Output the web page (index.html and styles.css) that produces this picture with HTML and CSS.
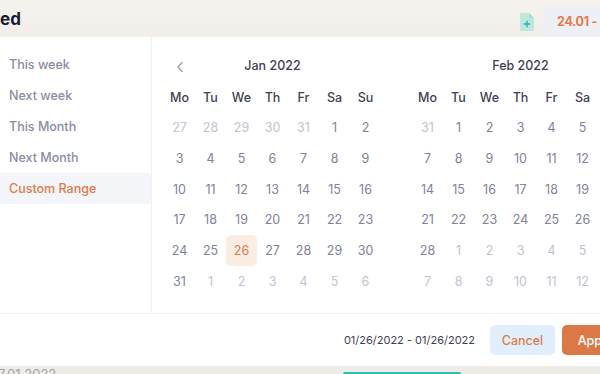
FILE: index.html
```html
<!DOCTYPE html>
<html lang="en">
<head>
  <meta charset="UTF-8" />
  <meta name="viewport" content="width=device-width, initial-scale=1" />
  <title>Date range picker</title>
  <link rel="stylesheet" href="styles.css">
</head>
<body>

<header class="topbar">
  <h1 class="page-title">ed</h1>
  <div class="toolbar">
    <span class="doc-icon">
      <svg width="14" height="18" viewBox="0 0 14 18">
        <path d="M0 1.5A1.5 1.5 0 0 1 1.5 0H9l5 5v11.5A1.5 1.5 0 0 1 12.5 18h-11A1.5 1.5 0 0 1 0 16.5z" fill="#bfe6df"/>
        <path d="M9 0v3.5A1.5 1.5 0 0 0 10.5 5H14z" fill="#a7dcd2"/>
        <path d="M7 8.2v5.6M4.2 11h5.6" stroke="#1fb7a6" stroke-width="1.4" stroke-linecap="round"/>
      </svg>
    </span>
    <button class="range-btn">24.01 -</button>
  </div>
</header>

<div class="picker">
  <div class="picker-body">
    <ul class="ranges">
      <li>This week</li>
      <li>Next week</li>
      <li>This Month</li>
      <li>Next Month</li>
      <li class="active">Custom Range</li>
    </ul>

    <div class="calendars">
      <div class="month">
        <div class="month-head">
          <span class="nav prev">
            <svg width="8" height="12" viewBox="0 0 8 12"><path d="M6 1.5 2 6l4 4.5" fill="none" stroke="#9a9cb3" stroke-width="1.3" stroke-linecap="round" stroke-linejoin="round"/></svg>
          </span>
          Jan 2022
        </div>
        <div class="grid">
          <span class="wd">Mo</span><span class="wd">Tu</span><span class="wd">We</span><span class="wd">Th</span><span class="wd">Fr</span><span class="wd">Sa</span><span class="wd">Su</span>
          <span class="off">27</span><span class="off">28</span><span class="off">29</span><span class="off">30</span><span class="off">31</span><span>1</span><span>2</span>
          <span>3</span><span>4</span><span>5</span><span>6</span><span>7</span><span>8</span><span>9</span>
          <span>10</span><span>11</span><span>12</span><span>13</span><span>14</span><span>15</span><span>16</span>
          <span>17</span><span>18</span><span>19</span><span>20</span><span>21</span><span>22</span><span>23</span>
          <span>24</span><span>25</span><span class="sel">26</span><span>27</span><span>28</span><span>29</span><span>30</span>
          <span>31</span><span class="off">1</span><span class="off">2</span><span class="off">3</span><span class="off">4</span><span class="off">5</span><span class="off">6</span>
        </div>
      </div>

      <div class="month">
        <div class="month-head">Feb 2022</div>
        <div class="grid">
          <span class="wd">Mo</span><span class="wd">Tu</span><span class="wd">We</span><span class="wd">Th</span><span class="wd">Fr</span><span class="wd">Sa</span><span class="wd">Su</span>
          <span class="off">31</span><span>1</span><span>2</span><span>3</span><span>4</span><span>5</span><span>6</span>
          <span>7</span><span>8</span><span>9</span><span>10</span><span>11</span><span>12</span><span>13</span>
          <span>14</span><span>15</span><span>16</span><span>17</span><span>18</span><span>19</span><span>20</span>
          <span>21</span><span>22</span><span>23</span><span>24</span><span>25</span><span>26</span><span>27</span>
          <span>28</span><span class="off">1</span><span class="off">2</span><span class="off">3</span><span class="off">4</span><span class="off">5</span><span class="off">6</span>
          <span class="off">7</span><span class="off">8</span><span class="off">9</span><span class="off">10</span><span class="off">11</span><span class="off">12</span><span class="off">13</span>
        </div>
      </div>
    </div>
  </div>

  <div class="picker-foot">
    <span class="selected-range">01/26/2022 - 01/26/2022</span>
    <button class="btn-cancel">Cancel</button>
    <button class="btn-apply">Apply</button>
  </div>
</div>

<div class="below">
  <span class="below-date">27.01.2022</span>
  <span class="below-bar"></span>
</div>

</body>
</html>
```

FILE: styles.css
```css
body {
  margin: 0;
  width: 600px;
  height: 374px;
  overflow: hidden;
  background-color: #efebe7;
  font-family: Inter, "Open Sans", sans-serif;
  color: #3f4254;
}
.topbar {
  height: 37px;
  display: flex;
  align-items: center;
  justify-content: space-between;
  background: linear-gradient(180deg, #f6f2ee 0%, #f2eee9 100%);
}
.page-title {
  margin: 0;
  font-size: 17px;
  font-weight: 700;
  color: #181c32;
  line-height: 1;
  margin-top: 2px;
}
.toolbar {
  display: flex;
  align-items: flex-end;
  align-self: flex-end;
  gap: 9px;
}
.doc-icon {
  display: flex;
  margin-bottom: 6px;
}
.range-btn {
  width: 57px;
  height: 31px;
  border: none;
  border-radius: 5px 0 0 0;
  background-color: #eef0f5;
  color: #e07b47;
  font-family: inherit;
  font-size: 12.5px;
  font-weight: 700;
  letter-spacing: -0.3px;
  text-align: left;
  padding: 0 0 0 14px;
  white-space: nowrap;
  overflow: hidden;
}
.picker {
  width: 641px;
  background-color: #fff;
}
.picker-body {
  display: flex;
  height: 276px;
  border-bottom: 1px solid #eff2f5;
}
.ranges {
  list-style: none;
  margin: 0;
  padding: 12px 0 0;
  width: 151px;
  border-right: 1px solid #eff2f5;
}
.ranges li {
  height: 31px;
  line-height: 31px;
  padding-left: 9px;
  font-size: 12.5px;
  font-weight: 500;
  color: #8a8ca6;
}
.ranges li.active {
  background-color: #f3f5f9;
  color: #e07b47;
}
.calendars {
  display: flex;
  gap: 31px;
  padding: 14px 12px 0;
}
.month {
  width: 217px;
}
.month-head {
  position: relative;
  height: 30.7px;
  line-height: 30.7px;
  text-align: center;
  font-size: 12.5px;
  font-weight: 500;
  color: #3f4254;
}
.nav {
  position: absolute;
  left: 12px;
  top: 10px;
  display: flex;
}
.grid {
  display: grid;
  grid-template-columns: repeat(7, 31px);
  grid-auto-rows: 30.7px;
}
.grid span {
  display: flex;
  align-items: center;
  justify-content: center;
  font-size: 12.5px;
  color: #80829c;
  border-radius: 5px;
}
.grid .wd {
  font-weight: 500;
  color: #3f4254;
}
.grid .off {
  color: #c2c3d1;
}
.grid .sel {
  background-color: #fcede4;
  color: #e07b47;
}
.picker-foot {
  height: 52px;
  display: flex;
  align-items: center;
  justify-content: flex-end;
  padding-right: 13px;
  gap: 7px;
}
.selected-range {
  font-size: 11px;
  color: #3f4254;
  margin-right: 8px;
}
.picker-foot button {
  height: 30px;
  border: none;
  border-radius: 5px;
  font-family: inherit;
  font-size: 12.5px;
  font-weight: 500;
  padding: 0;
}
.btn-cancel {
  width: 65px;
  background-color: #e1effc;
  color: #e07b47;
}
.btn-apply {
  width: 66px;
  background-color: #dc7846;
  color: #fff;
}
.below {
  height: 8px;
  display: flex;
  align-items: flex-start;
  justify-content: space-between;
  overflow: hidden;
}
.below-date {
  font-size: 13px;
  line-height: 14px;
  color: #a2a2a8;
  margin-left: -10px;
  margin-top: 1px;
}
.below-bar {
  width: 118px;
  height: 3px;
  margin-top: 6px;
  margin-right: 139px;
  background-color: #2cbfb0;
  border-radius: 2px 2px 0 0;
}
```
